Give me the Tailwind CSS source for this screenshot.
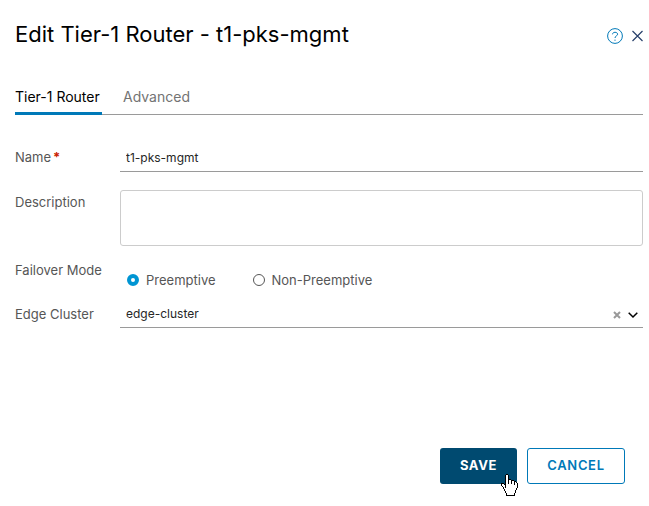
<!DOCTYPE html>
<html lang="en">
<head>
<meta charset="utf-8">
<meta name="viewport" content="width=device-width, initial-scale=1">
<title>Edit Tier-1 Router - t1-pks-mgmt</title>
<script src="https://cdn.jsdelivr.net/npm/@tailwindcss/browser@4"></script>
</head>
<body class="bg-white font-[Inter,'Open_Sans',sans-serif] text-[13px] leading-5 text-[#565656]">
<main class="pb-5 pl-[15px] pr-1.5 pt-5">
  <header class="flex items-center justify-between">
    <h1 class="text-[22px] leading-7 text-black">Edit Tier-1 Router - t1-pks-mgmt</h1>
    <div class="flex items-center gap-2 pt-1">
      <button type="button" aria-label="Help" class="size-4 text-[#0079b8]">
        <svg viewBox="0 0 16 16" class="size-4" fill="none" stroke="currentColor"><circle cx="8" cy="8" r="7.4"/><path d="M5.5 6.3C5.5 3.6 10.6 3.6 10.6 6.2C10.6 8 8 7.8 8 10M8 11.6V12.8"/></svg>
      </button>
      <button type="button" aria-label="Close" class="h-4 w-3 text-[#28406b]">
        <svg viewBox="0 0 12 16" class="h-4 w-3" fill="none" stroke="currentColor" stroke-width="1.2"><path d="M1.5 3L11.5 13M11.5 3L1.5 13"/></svg>
      </button>
    </div>
  </header>

  <nav role="tablist" class="mt-9 flex h-[31px] gap-[21px] border-b border-[#9a9a9a] text-sm">
    <button type="button" role="tab" aria-selected="true" class="-mb-px flex h-[31px] min-w-[87px] items-start border-b-3 border-[#0079b8] pt-[3px] leading-5 text-black">Tier-1 Router</button>
    <button type="button" role="tab" aria-selected="false" class="flex items-start pt-[3px] leading-5 text-[#737373]">Advanced</button>
  </nav>

  <form>
    <div class="mt-7 flex">
      <label for="name" class="w-[105px] shrink-0 pt-1">Name<span class="ml-0.5 font-bold text-[#c92100]">*</span></label>
      <input id="name" type="text" value="t1-pks-mgmt" required class="h-[29px] min-w-0 flex-1 border-b border-[#9a9a9a] px-1.5 text-xs text-[#262626] outline-none">
    </div>
    <div class="mt-[18px] flex">
      <label for="description" class="w-[105px] shrink-0 pt-0.5">Description</label>
      <textarea id="description" class="h-14 min-w-0 flex-1 resize-none rounded-[3px] border border-[#cccccc] px-1.5 text-xs outline-none"></textarea>
    </div>
    <div role="radiogroup" aria-labelledby="failover" class="mt-3.5 flex">
      <span id="failover" class="w-[105px] shrink-0">Failover Mode</span>
      <div class="flex gap-[37px] pl-[7px] pt-2.5">
        <label class="flex items-center gap-[7px]"><input type="radio" name="mode" checked class="size-3 appearance-none rounded-full border border-[#565656] checked:border-4 checked:border-[#0095d3]">Preemptive</label>
        <label class="flex items-center gap-[7px]"><input type="radio" name="mode" class="size-3 appearance-none rounded-full border border-[#565656] checked:border-4 checked:border-[#0095d3]">Non-Preemptive</label>
      </div>
    </div>
    <div class="mt-2 flex">
      <label for="cluster" class="w-[105px] shrink-0 pt-1.5">Edge Cluster</label>
      <div class="relative min-w-0 flex-1">
        <select id="cluster" class="block h-[30px] w-full appearance-none border-b border-[#9a9a9a] px-1.5 pt-0.5 text-xs text-[#262626] outline-none"><option>edge-cluster</option></select>
        <button type="button" aria-label="Clear" class="absolute right-[22px] top-[13px] size-2 text-[#999999]">
          <svg viewBox="0 0 8 8" class="size-2" fill="none" stroke="currentColor" stroke-width="2"><path d="M1 1L7 7M7 1L1 7"/></svg>
        </button>
        <svg viewBox="0 0 10 8" class="pointer-events-none absolute right-[5px] top-[13px] h-2 w-2.5 text-black" fill="none" stroke="currentColor" stroke-width="1.5"><path d="M.7 1.7L5 6L9.3 1.7"/></svg>
      </div>
    </div>
    <footer class="mt-[120px] flex justify-end gap-2.5 pr-[18px]">
      <div class="relative">
        <button type="submit" class="block h-9 w-[77px] rounded-[3px] bg-[#004a70] pb-0.5 font-bold tracking-wider text-white">SAVE</button>
        <svg aria-hidden="true" viewBox="0 0 17 22" class="pointer-events-none absolute left-[61px] top-[26px] z-10 h-[22px] w-[17px] overflow-visible" shape-rendering="crispEdges">
          <path fill="#fff" d="M5 1H7V6H10V7H13V8H15V9H16V14H15V16H14V19H13V21H6V19H5V17H4V15H3V13H2V12H1V10H3V11H5Z"/>
          <path fill="#000" d="M5 0H7V1H5ZM4 1H5V14H4ZM7 1H8V10H7ZM8 5H10V6H8ZM10 6H11V10H10ZM11 6H13V7H11ZM13 7H14V11H13ZM14 7H15V8H14ZM15 8H16V9H15ZM16 9H17V14H16ZM0 9H3V10H0ZM0 10H1V12H0ZM3 10H4V11H3ZM1 12H2V13H1ZM2 13H3V15H2ZM3 15H4V17H3ZM4 17H5V19H4ZM5 19H6V22H5ZM6 21H14V22H6ZM13 19H14V21H13ZM14 16H15V19H14ZM15 14H16V16H15Z"/>
        </svg>
      </div>
      <button type="button" class="h-9 w-[98px] rounded-[3px] border border-[#0079b8] pb-0.5 font-semibold tracking-wider text-[#0079b8]">CANCEL</button>
    </footer>
  </form>
</main>
</body>
</html>
